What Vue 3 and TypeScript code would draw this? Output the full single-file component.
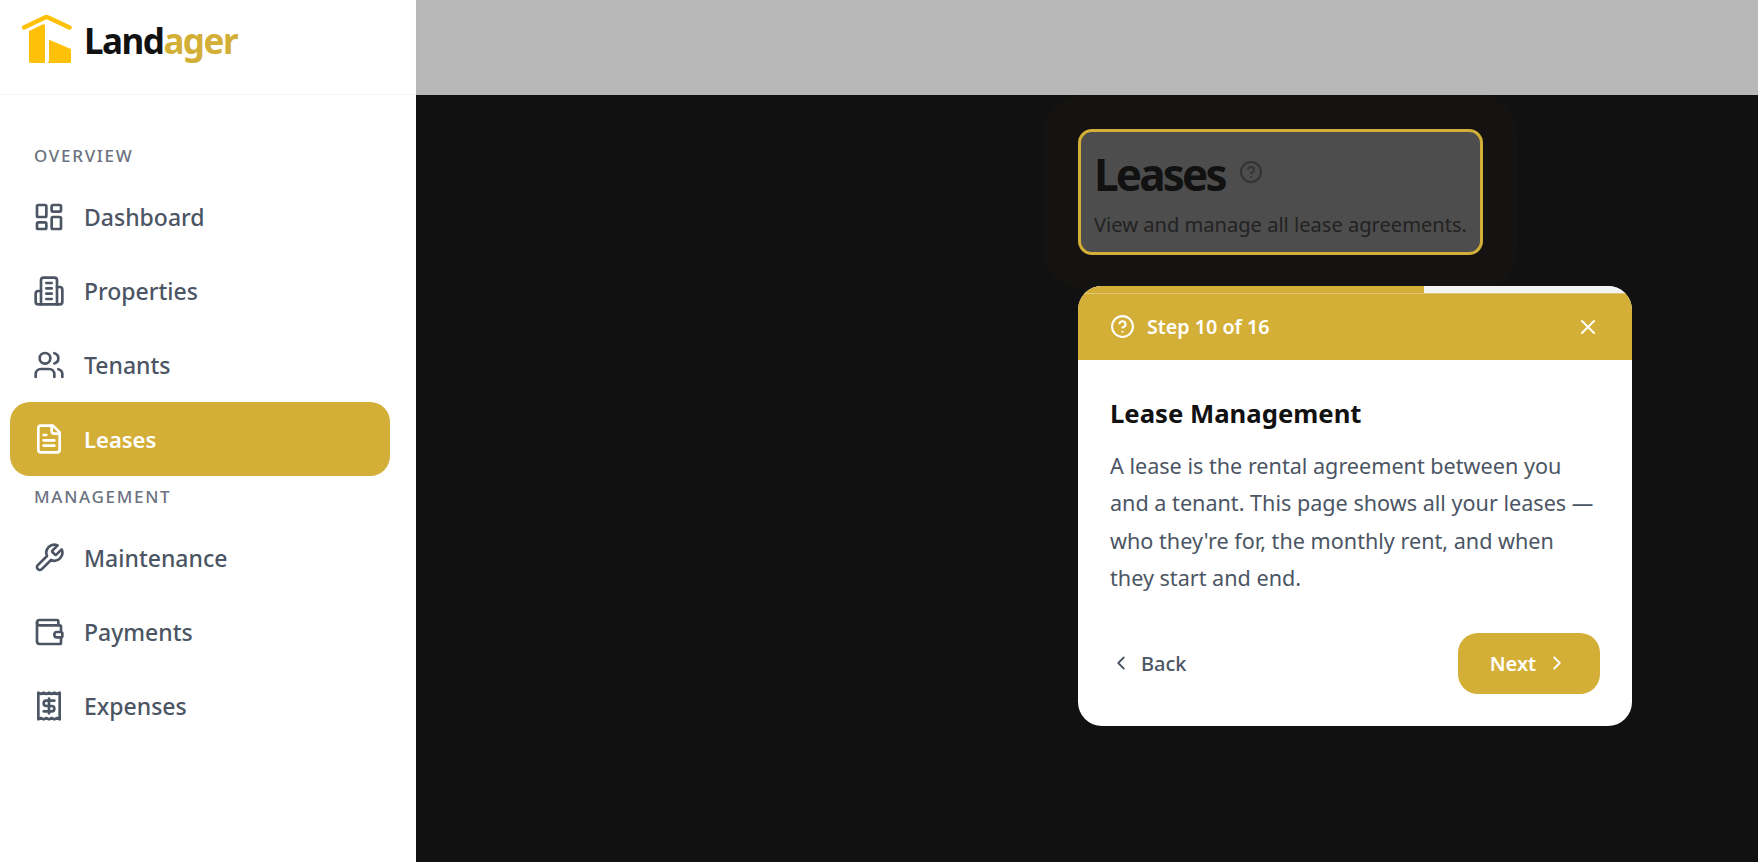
<template>
  <div class="app">
    <aside class="sidebar">
      <div class="brand">
        <svg class="logo" viewBox="0 0 50 50">
          <path d="M2 12.500 24.500 1.800 47.500 12.500" fill="none" stroke="#ffc107" stroke-width="4.500" stroke-linecap="round" stroke-linejoin="round" />
          <path d="M7 16 20.500 9.500c1.500-.7 2.500 0 2.500 1.500V46.500c0 1-.6 1.500-1.500 1.500H9c-1.200 0-2-.8-2-2Z" fill="#ffc107" />
          <path d="M25 48h22.500c1 0 1.500-.6 1.500-1.500V34L27.800 25c-.5-.2-.8 0-.8.5V45c0 1.500-.8 2.500-2 3Z" fill="#ffc107" />
        </svg>
        <span class="brand-name">Land<span class="brand-accent">ager</span></span>
      </div>
      <nav class="nav">
        <template v-for="group in groups" :key="group.title">
          <div class="nav-title">{{ group.title }}</div>
          <a v-for="item in group.items" :key="item.label" class="nav-item" :class="{ active: item.label === 'Leases' }">
            <svg class="nav-icon" viewBox="0 0 24 24" v-html="icons[item.icon]"></svg>
            <span>{{ item.label }}</span>
          </a>
        </template>
      </nav>
    </aside>

    <main class="main">
      <div class="topbar"></div>
      <div class="stage"></div>
    </main>

    <div class="tour">
      <div class="spotlight">
        <div class="title-row">
          <h1>Leases</h1>
          <svg class="help-icon" viewBox="0 0 24 24" v-html="icons.help"></svg>
        </div>
        <p>View and manage all lease agreements.</p>
      </div>

      <div class="popover">
        <div class="progress">
          <div class="progress-fill" :style="{ width: (step / total) * 100 + '%' }"></div>
        </div>
        <div class="pop-head">
          <svg class="step-icon" viewBox="0 0 24 24" v-html="icons.help"></svg>
          <span class="step-text">Step {{ step }} of {{ total }}</span>
          <svg class="close-icon" viewBox="0 0 24 24">
            <path d="M18 6 6 18" />
            <path d="m6 6 12 12" />
          </svg>
        </div>
        <div class="pop-body">
          <h3>Lease Management</h3>
          <p>A lease is the rental agreement between you and a tenant. This page shows all your leases — who they're for, the monthly rent, and when they start and end.</p>
          <div class="pop-actions">
            <button class="back">
              <svg viewBox="0 0 24 24"><path d="m15 18-6-6 6-6" /></svg>
              Back
            </button>
            <button class="next">
              Next
              <svg viewBox="0 0 24 24"><path d="m9 18 6-6-6-6" /></svg>
            </button>
          </div>
        </div>
      </div>
    </div>
  </div>
</template>

<script setup lang="ts">
const step = 10
const total = 16

const icons: Record<string, string> = {
  dashboard: '<rect x="3" y="3" width="7" height="9" rx="1"/><rect x="14" y="3" width="7" height="5" rx="1"/><rect x="14" y="12" width="7" height="9" rx="1"/><rect x="3" y="16" width="7" height="5" rx="1"/>',
  building: '<path d="M6 22V4a2 2 0 0 1 2-2h8a2 2 0 0 1 2 2v18Z"/><path d="M6 12H4a2 2 0 0 0-2 2v6a2 2 0 0 0 2 2h2"/><path d="M18 9h2a2 2 0 0 1 2 2v9a2 2 0 0 1-2 2h-2"/><path d="M10 6h4"/><path d="M10 10h4"/><path d="M10 14h4"/><path d="M10 18h4"/>',
  users: '<path d="M16 21v-2a4 4 0 0 0-4-4H6a4 4 0 0 0-4 4v2"/><circle cx="9" cy="7" r="4"/><path d="M22 21v-2a4 4 0 0 0-3-3.87"/><path d="M16 3.130a4 4 0 0 1 0 7.750"/>',
  file: '<path d="M15 2H6a2 2 0 0 0-2 2v16a2 2 0 0 0 2 2h12a2 2 0 0 0 2-2V7Z"/><path d="M14 2v4a2 2 0 0 0 2 2h4"/><path d="M10 9H8"/><path d="M16 13H8"/><path d="M16 17H8"/>',
  wrench: '<path d="M14.700 6.300a1 1 0 0 0 0 1.400l1.600 1.600a1 1 0 0 0 1.400 0l3.770-3.770a6 6 0 0 1-7.940 7.940l-6.910 6.910a2.120 2.120 0 0 1-3-3l6.910-6.910a6 6 0 0 1 7.940-7.940l-3.760 3.760z"/>',
  wallet: '<path d="M19 7V4a1 1 0 0 0-1-1H5a2 2 0 0 0 0 4h15a1 1 0 0 1 1 1v4h-3a2 2 0 0 0 0 4h3a1 1 0 0 0 1-1v-2a1 1 0 0 0-1-1"/><path d="M3 5v14a2 2 0 0 0 2 2h15a1 1 0 0 0 1-1v-4"/>',
  receipt: '<path d="M4 2v20l2-1 2 1 2-1 2 1 2-1 2 1 2-1 2 1V2l-2 1-2-1-2 1-2-1-2 1-2-1-2 1Z"/><path d="M16 8h-6a2 2 0 1 0 0 4h4a2 2 0 1 1 0 4H8"/><path d="M12 17.500v-11"/>',
  help: '<circle cx="12" cy="12" r="10"/><path d="M9.090 9a3 3 0 0 1 5.830 1c0 2-3 3-3 3"/><path d="M12 17h.010"/>'
}

const groups = [
  {
    title: 'OVERVIEW',
    items: [
      { label: 'Dashboard', icon: 'dashboard' },
      { label: 'Properties', icon: 'building' },
      { label: 'Tenants', icon: 'users' },
      { label: 'Leases', icon: 'file' }
    ]
  },
  {
    title: 'MANAGEMENT',
    items: [
      { label: 'Maintenance', icon: 'wrench' },
      { label: 'Payments', icon: 'wallet' },
      { label: 'Expenses', icon: 'receipt' }
    ]
  }
]
</script>

<style>
html,
body {
  margin: 0;
  overflow: hidden;
  background: #111;
}
</style>

<style scoped>
.app {
  position: relative;
  display: flex;
  height: 862px;
  font-family: 'Noto Sans', 'Open Sans', sans-serif;
}

.sidebar {
  width: 416px;
  flex-shrink: 0;
  background: #fff;
}

.brand {
  display: flex;
  align-items: flex-start;
  height: 95px;
  padding: 15px 0 0 22px;
  box-sizing: border-box;
  border-bottom: 1px solid #f3f4f6;
}

.logo {
  width: 50px;
  height: 50px;
}

.brand-name {
  margin-left: 12px;
  font-size: 35px;
  line-height: 52px;
  font-weight: 700;
  letter-spacing: -1.500px;
  color: #111;
}

.brand-accent {
  color: #d4af37;
}

.nav {
  padding: 40px 26px 0 10px;
  display: flex;
  flex-direction: column;
}

.nav-title {
  height: 45px;
  line-height: 42px;
  padding-left: 24px;
  font-size: 17px;
  font-weight: 500;
  letter-spacing: 1.700px;
  color: #6b7280;
}

.nav-item {
  display: flex;
  align-items: center;
  height: 74px;
  padding-left: 23px;
  border-radius: 20px;
  font-size: 23px;
  font-weight: 500;
  color: #4b5563;
}

.nav-item.active {
  background: #d4af37;
  color: #fff;
  font-size: 22px;
  font-weight: 600;
}

.nav-icon {
  width: 32px;
  height: 32px;
  margin-right: 19px;
  flex-shrink: 0;
  fill: none;
  stroke: currentColor;
  stroke-width: 2;
  stroke-linecap: round;
  stroke-linejoin: round;
}

.main {
  flex: 1;
  display: flex;
  flex-direction: column;
}

.topbar {
  height: 95px;
  background: #b8b8b8;
}

.stage {
  flex: 1;
  background: #111;
}

.tour {
  position: absolute;
  left: 1078px;
  top: 129px;
  width: 554px;
  display: flex;
  flex-direction: column;
  align-items: flex-start;
  gap: 31px;
}

.spotlight {
  width: 405px;
  height: 126px;
  box-sizing: border-box;
  padding: 10px 13px;
  background: #4d4d4d;
  border: 3px solid #d4af37;
  border-radius: 14px;
  box-shadow: 0 0 0 35px rgba(212, 175, 55, 0.02);
}

.title-row {
  display: flex;
  align-items: center;
  gap: 14px;
}

.spotlight h1 {
  margin: 0;
  font-size: 44px;
  line-height: 64px;
  font-weight: 700;
  letter-spacing: -2.800px;
  color: #111;
}

.help-icon {
  width: 24px;
  height: 24px;
  margin-top: -4px;
  fill: none;
  stroke: #333;
  stroke-width: 2;
  stroke-linecap: round;
  stroke-linejoin: round;
}

.spotlight p {
  margin: 4px 0 0;
  font-size: 20.100px;
  line-height: 30px;
  white-space: nowrap;
  color: #222;
}

.popover {
  width: 554px;
  height: 440px;
  border-radius: 24px;
  overflow: hidden;
  background: #fff;
}

.progress {
  height: 7px;
  background: #f3f4f6;
}

.progress-fill {
  height: 100%;
  background: #d4af37;
}

.pop-head {
  display: flex;
  align-items: center;
  height: 67px;
  padding: 0 32px;
  background: #d4af37;
  box-shadow: inset 0 1px rgba(255, 255, 255, 0.3);
  color: #fff;
}

.step-icon {
  width: 25px;
  height: 25px;
  margin-right: 12px;
  fill: none;
  stroke: #fff;
  stroke-width: 2;
  stroke-linecap: round;
  stroke-linejoin: round;
}

.step-text {
  flex: 1;
  font-size: 19.700px;
  font-weight: 600;
}

.close-icon {
  width: 24px;
  height: 24px;
  fill: none;
  stroke: #fff;
  stroke-width: 2;
  stroke-linecap: round;
  stroke-linejoin: round;
}

.pop-body {
  padding: 33px 32px 0;
}

.pop-body h3 {
  margin: 0;
  font-size: 25.700px;
  line-height: 42px;
  font-weight: 700;
  color: #111;
}

.pop-body p {
  margin: 12px 0 0;
  font-size: 21.600px;
  line-height: 37.400px;
  color: #4b5563;
}

.pop-actions {
  display: flex;
  justify-content: space-between;
  align-items: center;
  margin-top: 36px;
}

.pop-actions button {
  display: flex;
  align-items: center;
  border: 0;
  font-family: inherit;
  font-size: 20px;
  font-weight: 600;
}

.pop-actions svg {
  width: 22px;
  height: 22px;
  fill: none;
  stroke: currentColor;
  stroke-width: 2;
  stroke-linecap: round;
  stroke-linejoin: round;
}

.back {
  gap: 9px;
  padding: 0;
  background: none;
  color: #4b5563;
}

.back.back {
  font-weight: 500;
}

.next {
  justify-content: center;
  gap: 10px;
  width: 142px;
  height: 61px;
  padding: 0;
  border-radius: 20px;
  background: #d4af37;
  color: #fff;
}
</style>
